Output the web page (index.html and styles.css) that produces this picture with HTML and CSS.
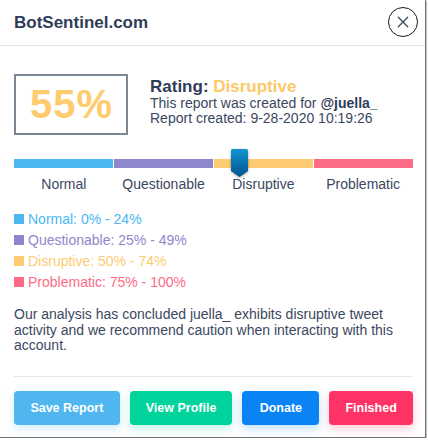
FILE: index.html
```
<!DOCTYPE html>
<html lang="en">
<head>
<meta charset="utf-8">
<title>BotSentinel.com</title>
<link rel="stylesheet" href="styles.css">
</head>
<body>
<div class="modal">
  <header class="head">
    <h1 class="title">BotSentinel.com</h1>
    <button class="close" aria-label="Close">
      <svg width="12" height="12" viewBox="0 0 12 12"><path d="M1.3 1.3 L10.7 10.7 M10.7 1.3 L1.3 10.7" stroke="#3b4860" stroke-width="1.3" stroke-linecap="round" fill="none"/></svg>
    </button>
  </header>
  <main class="content">
    <section class="summary">
      <div class="score">55%</div>
      <div class="info">
        <div class="rating">Rating: <span class="rating-val">Disruptive</span></div>
        <div class="line">This report was created for <b>@juella_</b></div>
        <div class="line">Report created: 9-28-2020 10:19:26</div>
      </div>
    </section>
    <section class="scale">
      <div class="bar">
        <span class="seg seg-normal"></span>
        <span class="seg seg-quest"></span>
        <span class="seg seg-disrupt"></span>
        <span class="seg seg-prob"></span>
        <svg class="marker" width="21" height="32" viewBox="-2 -1 21 32">
          <defs>
            <linearGradient id="mg" x1="0" y1="0" x2="0" y2="1">
              <stop offset="0" stop-color="#1196d0"/>
              <stop offset="1" stop-color="#00528e"/>
            </linearGradient>
          </defs>
          <path d="M1.5 0 H15.5 Q17 0 17 1.5 V22 L8.5 28 L0 22 V1.5 Q0 0 1.5 0 Z" fill="url(#mg)"/>
        </svg>
      </div>
      <div class="labels">
        <span>Normal</span>
        <span>Questionable</span>
        <span>Disruptive</span>
        <span>Problematic</span>
      </div>
    </section>
    <ul class="legend">
      <li class="c-normal"><i class="sw"></i>Normal: 0% - 24%</li>
      <li class="c-quest"><i class="sw"></i>Questionable: 25% - 49%</li>
      <li class="c-disrupt"><i class="sw"></i>Disruptive: 50% - 74%</li>
      <li class="c-prob"><i class="sw"></i>Problematic: 75% - 100%</li>
    </ul>
    <p class="desc">Our analysis has concluded juella_ exhibits disruptive tweet activity and we recommend caution when interacting with this account.</p>
  </main>
  <footer class="actions">
    <button class="btn btn-save">Save Report</button>
    <button class="btn btn-view">View Profile</button>
    <button class="btn btn-donate">Donate</button>
    <button class="btn btn-finish">Finished</button>
  </footer>
</div>
</body>
</html>
```
FILE: styles.css
```
html, body {
  margin: 0;
  padding: 0;
  background: #ffffff;
}

body {
  font-family: "Liberation Sans", Arial, sans-serif;
  font-size: 14px;
  color: #3b4760;
}

.modal {
  width: 426px;
  height: 438px;
  box-sizing: border-box;
  background: #fff;
  border-right: 1px solid #707070;
  border-bottom: 1px solid #707070;
  box-shadow: 1px 1px 0 #c4c4c4;
  overflow: hidden;
}

.head {
  height: 46px;
  box-sizing: border-box;
  border-bottom: 1px solid #dfe1e6;
  display: flex;
  align-items: center;
  justify-content: space-between;
  padding: 0 7px 0 14px;
}

.title {
  margin: 0;
  font-size: 17px;
  font-weight: bold;
  color: #2f3c58;
  line-height: 20px;
}

.close {
  width: 30px;
  height: 30px;
  border: 1px solid #1c1c1c;
  border-radius: 50%;
  background: #fff;
  padding: 0;
  display: flex;
  align-items: center;
  justify-content: center;
  margin-top: -1px;
}

.content {
  padding: 28px 12px 0 14px;
}

.summary {
  display: flex;
  align-items: flex-start;
  gap: 22px;
}

.score {
  width: 114px;
  height: 61px;
  box-sizing: border-box;
  border: 2px solid #7b8794;
  display: flex;
  align-items: center;
  justify-content: center;
  font-size: 40px;
  font-weight: bold;
  letter-spacing: 1px;
  color: #fecb6e;
  padding-left: 1px;
}

.info {
  margin-top: 3px;
}

.rating {
  font-size: 17px;
  font-weight: bold;
  line-height: 19px;
  color: #2f3c58;
}

.rating-val {
  color: #fdc867;
}

.line {
  line-height: 15px;
}

.line b {
  color: #2f3c58;
}

.scale {
  margin-top: 24px;
}

.bar {
  position: relative;
  display: flex;
  gap: 1px;
  height: 9px;
}

.seg {
  flex: 1;
}

.seg-normal { background: #4cb8f0; }
.seg-quest { background: #8f87cc; }
.seg-disrupt { background: #fecb70; }
.seg-prob { background: #fe6b86; }

.marker {
  position: absolute;
  left: 215px;
  top: -11px;
  filter: drop-shadow(0 1px 1.5px rgba(0, 0, 0, 0.35));
}

.labels {
  display: grid;
  grid-template-columns: repeat(4, 1fr);
  text-align: center;
  line-height: 16px;
  margin-top: 8px;
  color: #3b4760;
}

.legend {
  list-style: none;
  margin: 17px 0 0;
  padding: 0;
  line-height: 21px;
}

.sw {
  display: inline-block;
  width: 10px;
  height: 10px;
  margin-right: 4px;
  vertical-align: baseline;
  background: currentColor;
}

.c-normal { color: #4cb8f0; }
.c-quest { color: #8f87cc; }
.c-disrupt { color: #fecb70; }
.c-prob { color: #fe6b86; }

.desc {
  margin: 14px 0 0;
  line-height: 15.5px;
  color: #3b4760;
}

.actions {
  margin: 22px 12px 0 14px;
  border-top: 1px solid #e6e7ea;
  padding-top: 14px;
  display: flex;
  gap: 10px;
}

.btn {
  height: 34px;
  border: none;
  border-radius: 4px;
  padding: 0;
  white-space: nowrap;
  font-family: "Liberation Sans", Arial, sans-serif;
  font-size: 12.5px;
  font-weight: bold;
  color: #fff;
}

.btn-save {
  background: #4fb6f0;
  box-shadow: 0 4px 10px rgba(79, 182, 240, 0.25);
  width: 106px;
}

.btn-view {
  background: #00d39b;
  box-shadow: 0 4px 10px rgba(0, 211, 155, 0.25);
  width: 103px;
}

.btn-donate {
  background: #0a84f5;
  box-shadow: 0 4px 10px rgba(10, 132, 245, 0.25);
  width: 77px;
}

.btn-finish {
  background: #fe3466;
  box-shadow: 0 4px 10px rgba(254, 52, 102, 0.25);
  width: 84px;
}
```
